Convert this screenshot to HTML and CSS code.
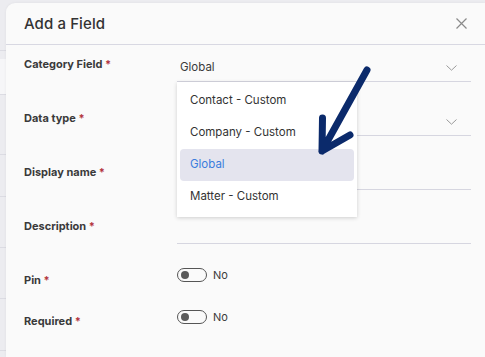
FILE: index.html
```html
<!DOCTYPE html>
<html>
<head>
<meta charset="utf-8">
<link rel="stylesheet" href="styles.css">
</head>
<body>
<div class="page">
  <div class="strip">
    <div class="strip-row s1"></div>
    <div class="strip-row s2"></div>
    <div class="strip-row s3"></div>
    <div class="strip-row s4"></div>
    <div class="strip-row s5"></div>
    <div class="strip-row s6"></div>
    <div class="strip-row s7"></div>
    <div class="strip-row s8"></div>
  </div>
  <div class="modal">
    <div class="modal-header">
      <h1 class="title">Add a Field</h1>
      <svg class="close" width="11" height="11" viewBox="0 0 11 11"><path d="M0.5 0.5 L10.5 10.5 M10.5 0.5 L0.5 10.5" stroke="#8a8a8a" stroke-width="1.2" fill="none"/></svg>
    </div>
    <div class="form">
      <div class="row">
        <div class="label">Category Field <span class="req">*</span></div>
        <div class="field select">
          <span class="value">Global</span>
          <svg class="chev" width="11" height="6" viewBox="0 0 11 6"><path d="M0.5 0.5 L5.5 5.2 L10.5 0.5" stroke="#9a9a9a" stroke-width="1" fill="none"/></svg>
          <div class="menu">
            <div class="item">Contact - Custom</div>
            <div class="item">Company - Custom</div>
            <div class="item active">Global</div>
            <div class="item">Matter - Custom</div>
          </div>
        </div>
      </div>
      <div class="row">
        <div class="label">Data type <span class="req">*</span></div>
        <div class="field select">
          <span class="value"></span>
          <svg class="chev" width="11" height="6" viewBox="0 0 11 6"><path d="M0.5 0.5 L5.5 5.2 L10.5 0.5" stroke="#9a9a9a" stroke-width="1" fill="none"/></svg>
        </div>
      </div>
      <div class="row">
        <div class="label">Display name <span class="req">*</span></div>
        <div class="field"><span class="value"></span></div>
      </div>
      <div class="row">
        <div class="label">Description <span class="req">*</span></div>
        <div class="field"><span class="value"></span></div>
      </div>
      <div class="row short">
        <div class="label">Pin <span class="req">*</span></div>
        <div class="toggle-wrap t1"><span class="toggle"><span class="knob"></span></span><span class="no">No</span></div>
      </div>
      <div class="row short">
        <div class="label">Required <span class="req">*</span></div>
        <div class="toggle-wrap t2"><span class="toggle"><span class="knob"></span></span><span class="no">No</span></div>
      </div>
    </div>
  </div>
</div>
<svg class="arrow" width="485" height="357" viewBox="0 0 485 357">
  <path d="M367 70 L322 151 M322.5 118 L322 151 L350 135" stroke="#0b2a6b" stroke-width="7" stroke-linecap="round" stroke-linejoin="round" fill="none"/>
</svg>
</body>
</html>
```
FILE: styles.css
```css
html, body {
  margin: 0;
  padding: 0;
  height: 100%;
  overflow: hidden;
}
body {
  background: #ececf0;
  font-family: "Inter", "Noto Sans", sans-serif;
  color: #333;
  position: relative;
}
.page {
  display: flex;
  height: 357px;
}
.strip {
  width: 6px;
  flex: none;
  display: flex;
  flex-direction: column;
}
.strip-row {
  border-bottom: 1px solid #dcdce3;
  flex: none;
}
.s1 { height: 50px; }
.s2 { height: 8px; border-bottom: none; }
.s3 { height: 35px; background: #f6f6f8; }
.s4 { height: 59px; }
.s5 { height: 41px; }
.s6 { height: 50px; }
.s7 { height: 50px; }
.s8 { height: 51px; }
.modal {
  flex: 1;
  margin-top: 3px;
  background: #fafafa;
  border-radius: 9px 0 0 0;
  box-shadow: 0 0 3px rgba(0,0,0,0.06);
}
.modal-header {
  height: 41px;
  border-bottom: 1px solid #d8d8e2;
  display: flex;
  align-items: center;
  justify-content: space-between;
  padding: 0 18px 0 18px;
}
.title {
  margin: 0;
  font-size: 15px;
  font-weight: 500;
  color: #333;
  letter-spacing: 0.1px;
}
.form {
  padding: 0 14px 0 18px;
}
.row {
  display: grid;
  grid-template-columns: 153px 1fr;
  height: 54px;
}
.row.short {
  height: 41px;
}
.label {
  font-size: 11px;
  font-weight: 700;
  color: #3a3a3a;
  line-height: 16px;
  padding-top: 11px;
}
.req {
  color: #b3343d;
}
.field {
  position: relative;
  border-bottom: 1px solid #d6d6e0;
  display: flex;
  align-items: flex-start;
  justify-content: space-between;
  padding: 14px 14px 0 3px;
  box-sizing: border-box;
  height: 37px;
}
.value {
  font-size: 11.5px;
  line-height: 16px;
  color: #3a3a3a;
}
.chev {
  margin-top: 6px;
}
.menu {
  position: absolute;
  top: 37px;
  left: 0;
  width: 180px;
  background: #fff;
  box-shadow: 0 1px 4px rgba(0,0,0,0.18);
  padding: 3px 3px 4px 3px;
  box-sizing: border-box;
  z-index: 2;
}
.item {
  height: 32px;
  line-height: 31px;
  padding-left: 10px;
  font-size: 11.5px;
  color: #333;
  border-radius: 4px;
}
.item.active {
  background: #e4e4ee;
  color: #3b7ddd;
}
.toggle-wrap {
  display: flex;
  align-items: center;
  gap: 6px;
  align-self: start;
}
.t1 { padding-top: 7px; }
.t2 { padding-top: 8px; }
.toggle {
  width: 30px;
  height: 14px;
  border: 1.3px solid #555;
  border-radius: 8px;
  box-sizing: border-box;
  display: flex;
  align-items: center;
  padding-left: 3px;
}
.knob {
  width: 8px;
  height: 8px;
  border-radius: 50%;
  background: #5a5a5a;
}
.no {
  font-size: 11px;
  color: #3a3a3a;
  line-height: 14px;
}
.arrow {
  position: absolute;
  left: 0;
  top: 0;
  z-index: 5;
  pointer-events: none;
}
```
